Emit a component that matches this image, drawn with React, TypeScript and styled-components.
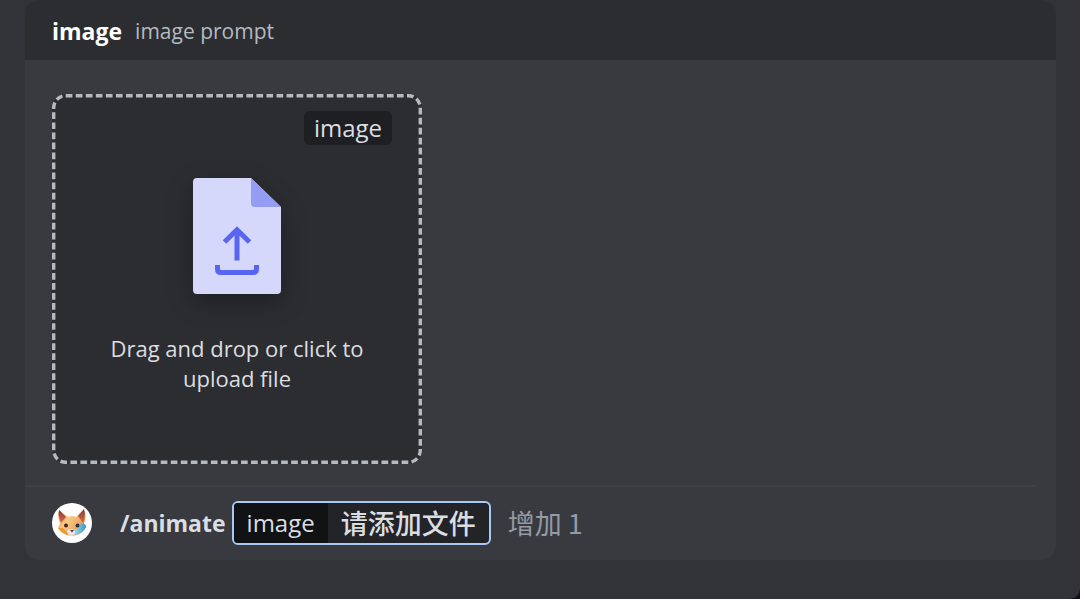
import React from "react";
import styled, { createGlobalStyle } from "styled-components";

const Global = createGlobalStyle`
  * { box-sizing: border-box; }
  html, body, #root { height: 100%; }
  body {
    margin: 0;
    background: #0e0f1c;
    color: #dbdee1;
    font-family: "Open Sans", "Noto Sans CJK SC", sans-serif;
  }
  button { font: inherit; color: inherit; background: none; border: 0; padding: 0; cursor: pointer; }
`;

const Page = styled.main`
  min-height: 100%;
  padding: 0 24px 39px 25px;
  background: #323338;
  border-bottom-right-radius: 10px;
`;

const Composer = styled.form`
  border-radius: 14px;
  background: #383a40;
  overflow: hidden;
`;

const OptionHeader = styled.header`
  display: flex;
  align-items: center;
  gap: 13px;
  height: 60px;
  padding: 2px 27px 0;
  background: #2b2d31;
`;

const OptionName = styled.h1`
  margin: 0;
  font-size: 23px;
  line-height: 30px;
  font-weight: 700;
  color: #ffffff;
`;

const OptionHint = styled.span`
  font-size: 21px;
  line-height: 30px;
  color: #b5bac1;
`;

const Attachments = styled.section`
  padding: 34px 27px 21px;
`;

const DropZone = styled.label`
  position: relative;
  display: flex;
  flex-direction: column;
  align-items: center;
  width: 370px;
  height: 370px;
  padding-top: 82px;
  border-radius: 14px;
  background: #2b2d31;
  cursor: pointer;
`;

const DashedFrame = styled.svg`
  position: absolute;
  inset: 0;
  width: 100%;
  height: 100%;
`;

const FileInput = styled.input`
  position: absolute;
  inset: 0;
  width: 100%;
  height: 100%;
  opacity: 0;
  cursor: pointer;
`;

const Tag = styled.span`
  position: absolute;
  top: 17px;
  right: 30px;
  padding: 0 10px;
  border-radius: 6px;
  background: #1e1f22;
  font-size: 24px;
  line-height: 34px;
`;

const FileArt = styled.svg`
  display: block;
  width: 92px;
  height: 120px;
  filter: drop-shadow(0 8px 12px rgba(0, 0, 0, 0.3));
`;

const DropText = styled.span`
  width: 260px;
  margin-top: 37px;
  font-size: 22px;
  line-height: 30px;
  text-align: center;
`;

const Divider = styled.hr`
  height: 2px;
  margin: 0 20px 0 0;
  border: 0;
  background: #3f4147;
`;

const CommandRow = styled.div`
  display: flex;
  align-items: center;
  height: 73px;
  padding: 0 27px 2px;
`;

const Avatar = styled.svg`
  width: 40px;
  height: 40px;
  margin-right: 28px;
`;

const Command = styled.strong`
  margin-right: 6px;
  font-size: 23px;
  line-height: 40px;
  font-weight: 700;
`;

const Option = styled.div`
  display: flex;
  height: 44px;
  margin-right: 17px;
  border: 2px solid #a9c9f5;
  border-radius: 6px;
  background: #232428;
  font-size: 24px;
  line-height: 40px;
  overflow: hidden;
`;

const OptionKey = styled.span`
  padding: 0 13px;
  background: #111214;
`;

const OptionValue = styled.button`
  padding: 0 13px;
  font-family: "Noto Sans CJK SC", sans-serif;
  font-size: 27px;
  font-weight: 500;
  line-height: 40px;
`;

const MoreButton = styled.button`
  font-family: "Noto Sans CJK SC", sans-serif;
  font-size: 27px;
  line-height: 40px;
  color: #949ba4;
`;

function UploadArt() {
  return (
    <FileArt viewBox="0 0 92 120" aria-hidden="true">
      <path d="M6 2H60L90 31V114a4 4 0 0 1-4 4H6a4 4 0 0 1-4-4V6a4 4 0 0 1 4-4Z" fill="#d6d8fb" />
      <path d="M60 2 90 31H64a4 4 0 0 1-4-4Z" fill="#949cf3" />
      <path d="M46 84.500V54M33.500 66 46 53.800 58.500 66" fill="none" stroke="#5865f2" strokeWidth="5" />
      <path d="M26.500 89v4q0 3.500 3.500 3.500h32q3.500 0 3.500-3.500v-4" fill="none" stroke="#5865f2" strokeWidth="5" />
    </FileArt>
  );
}

function FoxAvatar() {
  return (
    <Avatar viewBox="0 0 40 40" role="img" aria-label="Fox avatar">
      <defs>
        <linearGradient id="fur" x1="0" y1="0" x2="1" y2="0.6">
          <stop offset="0" stopColor="#ee9a45" />
          <stop offset=".45" stopColor="#f6c987" />
          <stop offset=".8" stopColor="#eda764" />
          <stop offset="1" stopColor="#d97f55" />
        </linearGradient>
        <linearGradient id="ear" x1="0" y1="0" x2="0" y2="1">
          <stop offset="0" stopColor="#7d3547" />
          <stop offset="1" stopColor="#e0703f" />
        </linearGradient>
        <linearGradient id="cheek" x1="0" y1="0" x2="1" y2="0">
          <stop offset="0" stopColor="#a9d9e6" />
          <stop offset="1" stopColor="#2f9cc6" />
        </linearGradient>
        <filter id="wash"><feGaussianBlur stdDeviation=".6" /></filter>
      </defs>
      <circle cx="20" cy="20" r="20" fill="#fff" />
      <g filter="url(#wash)">
        <path d="M7 7 16 14Q20 12 24 14L32 6Q35 13 32 20L34 24Q31 30 25 32L20 33 15 32Q9 30 6 25L8 20Q5 13 7 7Z" fill="url(#fur)" />
        <path d="M7 7 14 14 9 20Q6 13 7 7Z" fill="url(#ear)" />
        <path d="M32 6 26 13 31 20Q34 13 32 6Z" fill="url(#ear)" />
        <path d="M6 25Q10 24 13 27L17 31 15 32Q9 30 6 25Z" fill="#f09a35" />
        <path d="M22 27Q27 25 29 21L33 21 34 24Q31 30 24 32Z" fill="url(#cheek)" />
        <path d="M15 28Q19 24 23 28L23 31 20 33 16 31Z" fill="#efe6e4" />
        <ellipse cx="14" cy="22.500" rx="2" ry="1.900" fill="#4a2218" />
        <ellipse cx="25.500" cy="22.500" rx="2" ry="1.900" fill="#2a3540" />
        <path d="M18 27h4l-2 2.500Z" fill="#46394f" />
      </g>
    </Avatar>
  );
}

export default function App() {
  return (
    <>
      <Global />
      <Page>
        <Composer onSubmit={(e) => e.preventDefault()}>
          <OptionHeader>
            <OptionName>image</OptionName>
            <OptionHint>image prompt</OptionHint>
          </OptionHeader>
          <Attachments>
            <DropZone>
              <DashedFrame viewBox="0 0 370 370" aria-hidden="true">
                <rect
                  x="1.700" y="1.700" width="366.600" height="366.600" rx="12"
                  fill="none" stroke="#b5bac1" strokeWidth="3.400"
                  pathLength="1440" strokeDasharray="6.700 3.300"
                />
              </DashedFrame>
              <Tag>image</Tag>
              <UploadArt />
              <DropText>Drag and drop or click to upload file</DropText>
              <FileInput type="file" />
            </DropZone>
          </Attachments>
          <Divider />
          <CommandRow>
            <FoxAvatar />
            <Command>/animate</Command>
            <Option>
              <OptionKey>image</OptionKey>
              <OptionValue type="button">请添加文件</OptionValue>
            </Option>
            <MoreButton type="button">增加 1</MoreButton>
          </CommandRow>
        </Composer>
      </Page>
    </>
  );
}
